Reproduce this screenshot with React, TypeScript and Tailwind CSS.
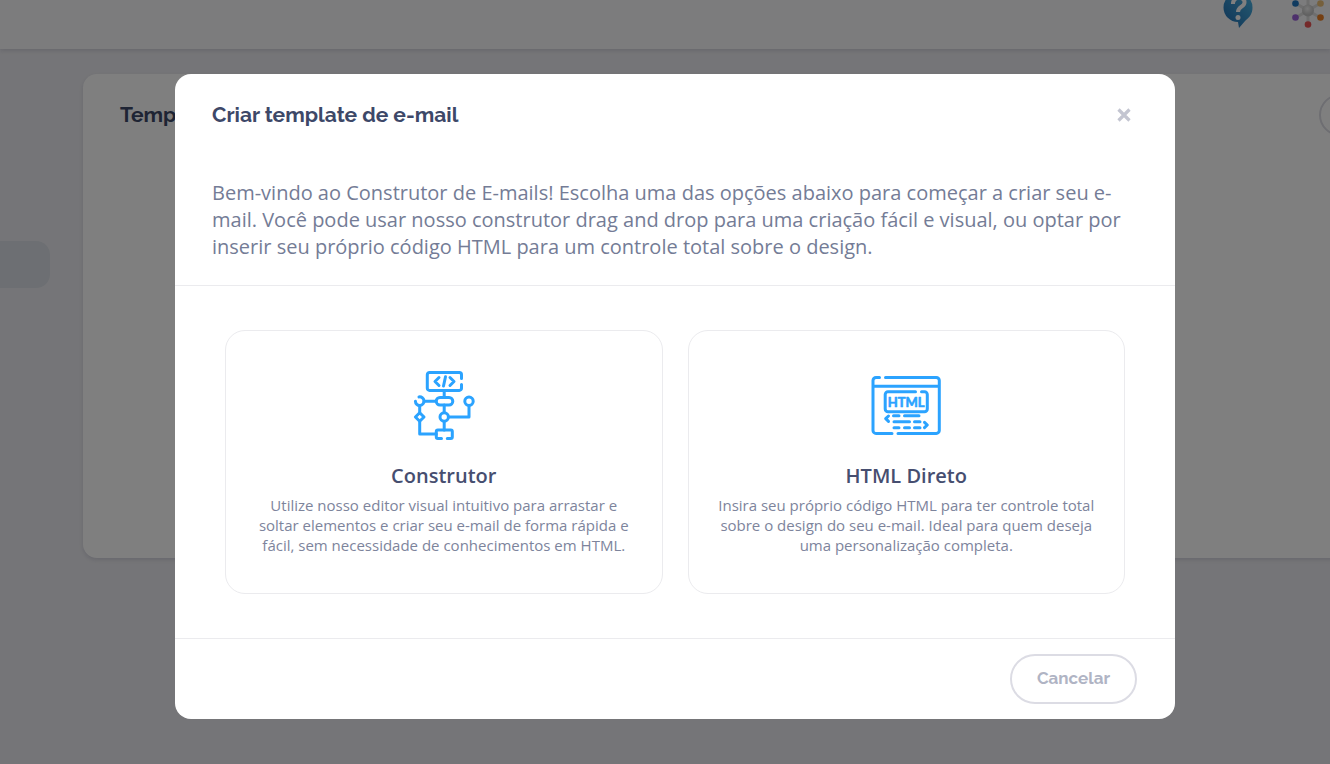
import type { ReactNode } from "react";

interface OptionCardProps {
  icon: ReactNode;
  title: string;
  description: string;
}

function HelpIcon() {
  return (
    <svg width="30" height="28" viewBox="0 0 30 28" aria-hidden="true">
      <defs>
        <linearGradient id="help" x1="0" y1="1" x2="1" y2="0">
          <stop offset="0.2" stopColor="#2878b8" />
          <stop offset="0.9" stopColor="#48b0e0" />
        </linearGradient>
      </defs>
      <path
        d="M15 -7a14.500 14.500 0 0 1 14.500 14.500c0 6-3 10-7 13L16 28l-1-6A14.500 14.500 0 0 1 15 -7z"
        fill="url(#help)"
      />
      <path
        d="M10 4c-.5-8 12-8 11.500-1.500 0 4.500-6.500 4-6.500 9.500"
        fill="none"
        stroke="#fff"
        strokeWidth="4"
      />
      <circle cx="15" cy="17.500" r="2.500" fill="#fff" />
    </svg>
  );
}

function HubIcon() {
  return (
    <svg width="34" height="28" viewBox="0 0 34 28" aria-hidden="true">
      <defs>
        <radialGradient id="hub" cx="0.45" cy="0.35">
          <stop offset="0" stopColor="#f2f2f2" />
          <stop offset="1" stopColor="#c4c4c4" />
        </radialGradient>
      </defs>
      <path d="M5 3.500L29 17.500M29 3.500L5 17.500M17 -4V24" stroke="#dcdcdc" strokeWidth="3" />
      <circle cx="17" cy="10.500" r="6" fill="url(#hub)" />
      <circle cx="4.500" cy="3.500" r="3.300" fill="#2076c0" />
      <circle cx="29.500" cy="3.500" r="3.300" fill="#ecc078" />
      <circle cx="4.500" cy="17.500" r="3.300" fill="#9a60d8" />
      <circle cx="29.500" cy="17.500" r="3.300" fill="#ea7e24" />
      <circle cx="17" cy="24.500" r="3.300" fill="#ea5454" />
    </svg>
  );
}

function BuilderIcon() {
  return (
    <svg
      width="70"
      height="70"
      viewBox="0 0 70 70"
      fill="none"
      stroke="#2ba3ff"
      strokeWidth="3"
      strokeLinecap="round"
      strokeLinejoin="round"
      aria-hidden="true"
    >
      <path d="M52.500 8.500V4.700a2.200 2.200 0 0 0-2.200-2.200H20.500a2.200 2.200 0 0 0-2.200 2.200v13.500a2.200 2.200 0 0 0 2.200 2.200h29.800a2.200 2.200 0 0 0 2.200-2.200V14.500" />
      <path d="M30 7.500L26 11.500l4 4M41 7.500l4 4-4 4M36.500 6.800L34.500 16" />
      <path d="M35.200 20.500v7M35.200 35v7.500M35.200 51.500V60M15 31.200h12M39.500 47H60V35.500M10.700 35.500v7M10.700 51.500V64h16.500" />
      <rect x="27.200" y="27.500" width="16.600" height="7.500" rx="3.750" />
      <path d="M10 26.900a4.300 4.300 0 1 1-3.600 4.300" />
      <circle cx="60" cy="31.200" r="4.200" />
      <circle cx="35.200" cy="47" r="4.200" />
      <path d="M10.700 42.700l4.300 4.300-4.300 4.300L6.400 47z" />
      <path d="M32.500 68.400h-3.700a1.500 1.500 0 0 1-1.500-1.500v-5.400a1.500 1.500 0 0 1 1.500-1.500h13a1.500 1.500 0 0 1 1.500 1.500v5.400a1.500 1.500 0 0 1-1.500 1.500h-3.500" />
    </svg>
  );
}

function HtmlIcon() {
  return (
    <svg
      width="70"
      height="70"
      viewBox="0 0 70 70"
      fill="none"
      stroke="#2ba3ff"
      strokeWidth="3"
      strokeLinecap="round"
      strokeLinejoin="round"
      aria-hidden="true"
    >
      <path d="M14.500 7.400h50.800a3 3 0 0 1 3 3v50a3 3 0 0 1-3 3H27M21 63.400H5a3 3 0 0 1-3-3v-50a3 3 0 0 1 3-3h3.500M2 16.200h66" />
      <path d="M44.500 21.700H17a2.800 2.800 0 0 0-2.800 2.800v14.400a2.800 2.800 0 0 0 2.800 2.800h36.500a2.800 2.800 0 0 0 2.800-2.800V24.500a2.800 2.800 0 0 0-2.800-2.800h-3" />
      <text
        x="35.200"
        y="36.500"
        textAnchor="middle"
        fill="#2ba3ff"
        stroke="#2ba3ff"
        strokeWidth="0.600"
        fontFamily="Lato, sans-serif"
        fontWeight="700"
        fontSize="13"
      >
        HTML
      </text>
      <path d="M22.500 45.700H28M33.500 45.700h14.500M23 51.700h15.500M43.500 51.700H49M23 57.700h5M33.500 57.700h5M43.500 57.700H49" />
      <path d="M17.500 46l-2.800 2.700 2.800 2.700M53.500 52.300l2.800 2.700-2.800 2.700" />
    </svg>
  );
}

function OptionCard({ icon, title, description }: OptionCardProps) {
  return (
    <button
      type="button"
      className="flex flex-1 cursor-pointer flex-col items-center rounded-[20px] border border-[#ebebee] px-6 pt-[39px] pb-[38px] text-center"
    >
      {icon}
      <span className="mt-[21px] text-xl leading-[30px] font-semibold text-[#464e70]">{title}</span>
      <span className="mt-1 text-[15px] leading-5 text-[#7d849c]">{description}</span>
    </button>
  );
}

function Backdrop() {
  return (
    <div className="flex min-h-screen flex-col overflow-hidden bg-[#ebebf0]">
      <header className="flex h-[49px] shrink-0 items-start justify-end gap-[38px] bg-[#f9f9fb] pr-[5px] shadow-[0_2px_4px_rgba(60,60,100,0.15)]">
        <HelpIcon />
        <HubIcon />
      </header>
      <div className="flex">
        <aside className="w-[83px] shrink-0 pt-48">
          <div className="h-[47px] w-[50px] rounded-r-[14px] bg-[#dadfe6]" />
        </aside>
        <main className="-mr-40 mt-[25px] h-[484px] flex-1 rounded-[14px] bg-white px-[37px] pt-5 shadow-[0_2px_4px_rgba(60,60,100,0.15)]">
          <div className="flex items-center justify-between">
            <h1 className="font-[Raleway,Lato,sans-serif] text-[21px] leading-8 font-bold text-[#3d4868]">
              Templates
            </h1>
            <button
              type="button"
              aria-label="Novo template"
              className="h-[42px] w-[134px] rounded-full border-2 border-[#dcdce4]"
            />
          </div>
        </main>
      </div>
    </div>
  );
}

export default function App() {
  return (
    <div className="font-['Open_Sans',sans-serif]">
      <Backdrop />
      <div className="fixed inset-0 z-40 flex items-start justify-center overflow-y-auto bg-black/50 pt-[74px] pl-5">
        <div
          role="dialog"
          aria-modal="true"
          aria-labelledby="modal-title"
          className="w-full max-w-[1000px] rounded-2xl bg-white"
        >
          <header className="flex h-[81px] items-center justify-between px-[37px]">
            <h2
              id="modal-title"
              className="font-[Raleway,Lato,sans-serif] text-[21px] leading-8 font-bold text-[#3d4868]"
            >
              Criar template de e-mail
            </h2>
            <button type="button" aria-label="Fechar" className="flex size-7 cursor-pointer items-center justify-center">
              <svg width="14" height="14" viewBox="0 0 14 14" stroke="#c3c5d1" strokeWidth="3.200" aria-hidden="true">
                <path d="M1.500 1.500l11 11M12.500 1.500l-11 11" />
              </svg>
            </button>
          </header>

          <p className="border-b border-[#ebebee] px-[37px] pt-6 pb-[25px] text-xl leading-[27px] text-[#747c96]">
            Bem-vindo ao Construtor de E-mails! Escolha uma das opções abaixo para começar a criar seu e-mail. Você
            pode usar nosso construtor drag and drop para uma criação fácil e visual, ou optar por inserir seu próprio
            código HTML para um controle total sobre o design.
          </p>

          <div className="flex gap-[25px] px-[50px] py-11">
            <OptionCard
              icon={<BuilderIcon />}
              title="Construtor"
              description="Utilize nosso editor visual intuitivo para arrastar e soltar elementos e criar seu e-mail de forma rápida e fácil, sem necessidade de conhecimentos em HTML."
            />
            <OptionCard
              icon={<HtmlIcon />}
              title="HTML Direto"
              description="Insira seu próprio código HTML para ter controle total sobre o design do seu e-mail. Ideal para quem deseja uma personalização completa."
            />
          </div>

          <footer className="flex justify-end border-t border-[#ebebee] px-[38px] py-[15px]">
            <button
              type="button"
              className="h-[50px] cursor-pointer rounded-full border-2 border-[#dcdce4] px-[25px] font-[Raleway,Lato,sans-serif] text-[17px] font-bold text-[#b0b4c4]"
            >
              Cancelar
            </button>
          </footer>
        </div>
      </div>
    </div>
  );
}
